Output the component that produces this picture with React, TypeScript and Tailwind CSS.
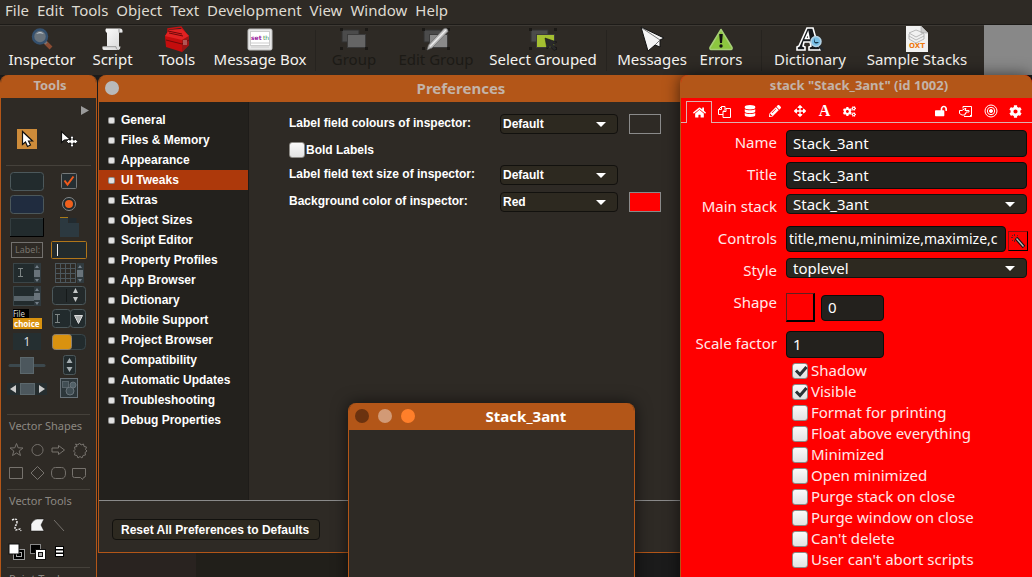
import React, { useState } from "react";
import type { ReactNode } from "react";
import { FaArrowsAlt, FaCog, FaCogs, FaDatabase, FaFont, FaHome, FaLockOpen, FaPencilAlt } from "react-icons/fa";

const menus = ["File", "Edit", "Tools", "Object", "Text", "Development", "View", "Window", "Help"];

const InspectorIcon = () => (
    <svg width="24" height="24" viewBox="0 0 24 24">
        <path d="M15 15l6 6" stroke="#8a4b32" strokeWidth="4" />
        <path d="M14 14l2.5 2.5" stroke="#777" strokeWidth="3" />
        <circle cx="10" cy="9.500" r="7" fill="#68727b" stroke="#34506e" strokeWidth="2.500" />
        <path d="M6 7q4-4 8 0q-4-1.500-8 0" fill="#c3ccd4" />
    </svg>
);

const ScriptIcon = () => (
    <svg width="24" height="24" viewBox="0 0 24 24">
        <defs>
            <linearGradient id="paper" x1="0" y1="0" x2="1" y2="1">
                <stop offset="0" stopColor="#fff" />
                <stop offset="1" stopColor="#d5d5d5" />
            </linearGradient>
        </defs>
        <path d="M5 1.500h14q3 0 2.500 4H18v14h1.500q0 3-2 3.500H3q-2 0-1.500-3.500h4.500V6Q3.500 4 5 1.500z" fill="url(#paper)" />
        <path d="M18 2v3.500h3M2.500 19.700h12.500q0 2 1.500 3" stroke="#999" fill="none" />
    </svg>
);

const ToolboxIcon = () => (
    <svg width="26" height="26" viewBox="0 0 26 26">
        <path d="M4 8V3l13-2 5 7" stroke="#c41212" strokeWidth="1.500" fill="none" />
        <path d="M1 10L5 4l13-1 7 7v9l-7 7L2 21z" fill="#c40d0d" />
        <path d="M1 10l17 4 7-4-7-7-13 1z" fill="#e02222" />
        <path d="M18 14l7-4v9l-7 7z" fill="#9a1515" />
        <path d="M2 14l16 4 7-4M5 7l14 3M4 5l14 3" stroke="#6e0808" fill="none" />
        <rect x="19" y="14" width="4" height="5" fill="#b05555" />
    </svg>
);

const MessageBoxIcon = () => (
    <svg width="26" height="24" viewBox="0 0 26 24">
        <rect x="1" y="2" width="24" height="21" rx="1.500" fill="#e9e9e9" stroke="#bbb" />
        <rect x="3.500" y="4.500" width="19" height="14" fill="#fff" stroke="#ccc" />
        <path d="M4 16h18M4 20h18" stroke="#ccc" />
        <text x="4" y="13" fontSize="6" fontWeight="bold" fontFamily="DejaVu Sans" fill="#9a1ba0">set</text>
        <text x="16" y="13" fontSize="6" fontFamily="DejaVu Sans" fill="#3f8f55">th</text>
    </svg>
);

const GroupIcon = ({ front, edit, select }: { front: string; edit?: boolean; select?: boolean }) => (
    <svg width="30" height="24" viewBox="0 0 30 24">
        <rect x="3" y="3" width="17" height="12" fill="#4b4b4b" stroke="#303030" />
        <rect x="8.500" y="7.500" width="18" height="13" fill={front} stroke="#3b3b3b" />
        <path d="M1 1h3v3H1zM26 1h3v3h-3zM1 20h3v3H1zM26 20h3v3h-3z" fill="#1b1916" />
        {edit && (
            <>
                <path d="M6 23l1.500-5L23 1.500q4-1 4 3L11 21z" fill="#bbb" stroke="#666" strokeWidth=".7" />
                <path d="M9 19.500L25 3" stroke="#eee" strokeWidth="1.300" />
            </>
        )}
        {select && <path d="M17 11l12 4-4 2.500 4 4.500-3 1.500-4-4.500-3 3z" fill="#292929" stroke="#111" strokeWidth=".5" />}
    </svg>
);

const PlaneIcon = () => (
    <svg width="26" height="26" viewBox="0 0 26 26">
        <path d="M2 1l23 11-4 2v7l-5-2-7 6z" fill="#f4f4f4" stroke="#111" />
        <path d="M3 2l18 12M16 19l5-5" stroke="#666" strokeWidth=".9" />
    </svg>
);

const WarningIcon = () => (
    <svg width="26" height="24" viewBox="0 0 26 24">
        <path d="M13 2.500L24 20.500q.5 2-1 2H3q-1.500 0-1-2z" fill="#8cc63f" stroke="#a6cf76" strokeWidth="1.500" strokeLinejoin="round" />
        <path d="M11.200 7h3.600l-.8 9h-2z" fill="#111" />
        <circle cx="13" cy="19" r="1.700" fill="#111" />
    </svg>
);

const DictionaryIcon = () => (
    <svg width="30" height="26" viewBox="0 0 30 26">
        <path d="M2 21l2-1L12 2h6l5 18 2 1v3H14v-3l2-1-1-4H9l-1 4 2 1v3H2zM10.500 12.500H14L13 7z" fill="#15181c" stroke="#fff" strokeWidth="1.600" />
        <path d="M24 20l4 4" stroke="#25292d" strokeWidth="3" />
        <circle cx="21" cy="15.500" r="5" fill="#78bfe6" stroke="#b5d3e6" strokeWidth="1.500" />
        <path d="M20 12v4h4q-3 3-5 0z" fill="#14364c" />
    </svg>
);

const OxtIcon = () => (
    <svg width="24" height="26" viewBox="0 0 24 26">
        <path d="M1 0h15l7 7v19H1z" fill="#f1f1f1" />
        <path d="M16 0v7h7" fill="#ccc" stroke="#aaa" strokeWidth=".6" />
        <path d="M4 7l7-3 8 3-8 4zM4 10l7 4 8-4M4 13l7 4 8-4M4 8v5M19 8v5" stroke="#aaa" fill="none" strokeWidth=".8" />
        <text x="12" y="22" textAnchor="middle" fontSize="7" fontWeight="bold" fontFamily="DejaVu Sans" fill="#ee7a10">OXT</text>
    </svg>
);

type Tool = { label: string; width: string; icon: ReactNode; disabled?: boolean; divider?: boolean };

const toolbar: Tool[] = [
    { label: "Inspector", width: "w-[84px]", icon: <InspectorIcon /> },
    { label: "Script", width: "w-[57px]", icon: <ScriptIcon /> },
    { label: "Tools", width: "w-[72px]", icon: <ToolboxIcon /> },
    { label: "Message Box", width: "w-[94px]", icon: <MessageBoxIcon />, divider: true },
    { label: "Group", width: "w-[60px]", icon: <GroupIcon front="#656565" />, disabled: true },
    { label: "Edit Group", width: "w-[104px]", icon: <GroupIcon front="#8a8a8a" edit />, disabled: true },
    { label: "Select Grouped", width: "w-[110px]", icon: <GroupIcon front="#a4bf31" select />, divider: true },
    { label: "Messages", width: "w-[74px]", icon: <PlaneIcon /> },
    { label: "Errors", width: "w-[64px]", icon: <WarningIcon />, divider: true },
    { label: "Dictionary", width: "w-[80px]", icon: <DictionaryIcon /> },
    { label: "Sample Stacks", width: "w-[134px]", icon: <OxtIcon /> },
];

const Toolbar = () => (
    <div className="flex bg-[#888888]">
        <div className="flex h-[50px] bg-[#2e2a25] border-t border-[#3d3934]">
            {toolbar.map((tool) => (
                <React.Fragment key={tool.label}>
                    <button
                        disabled={tool.disabled}
                        className={`${tool.width} shrink-0 flex flex-col items-center pt-px whitespace-nowrap ${tool.disabled ? "text-[#1c1a16]" : "text-[#f5f3ef]"}`}
                    >
                        <span className="h-6 flex items-center">{tool.icon}</span>
                        <span className="relative leading-4">{tool.label}</span>
                    </button>
                    {tool.divider && <div className="w-px mx-2 my-1 bg-[#26231f]" />}
                </React.Fragment>
            ))}
        </div>
    </div>
);

/* ---------- tools palette ---------- */

const edge = "#4c585b";
const fill = "#222b2d";

const Cell = ({ label, children }: { label: string; children: ReactNode }) => (
    <button aria-label={label} className="block">
        <svg width="42" height="23" viewBox="0 0 42 23">{children}</svg>
    </button>
);

const ibeam = (x: number, y: number) => <path d={`M${x} ${y}h5M${x + 2.5} ${y}v8M${x} ${y + 8}h5`} stroke="#7d8585" fill="none" />;
const scroller = (x: number) => (
    <>
        <rect x={x} y="1" width="7" height="20" fill="#303a3e" />
        <rect x={x} y="8" width="6" height="7" fill="#69737a" />
        <path d={`M${x + 1} 6l2-3 2 3zM${x + 1} 17l2 3 2-3z`} fill="#75808a" />
    </>
);

const widgets: [string, ReactNode][] = [
    ["Button", <rect x="4.500" y="2.500" width="33" height="18" rx="3" fill={fill} stroke={edge} />],
    ["Check box", <>
        <rect x="13.500" y="3.500" width="15" height="15" rx="1" fill="#252e32" stroke="#75797a" />
        <path d="M16.500 10.500l3 4 6-8" stroke="#f05a1c" strokeWidth="2" fill="none" />
    </>],
    ["Default button", <rect x="4.500" y="2.500" width="33" height="18" rx="3" fill="#202c3f" stroke={edge} />],
    ["Radio button", <>
        <circle cx="21" cy="11" r="6.500" fill="#222b2d" stroke="#85888a" />
        <circle cx="21" cy="11" r="4" fill="#f0601c" />
    </>],
    ["Rectangle button", <>
        <rect x="4" y="2" width="34" height="19" fill={fill} />
        <path d="M4.500 20V2.500H37" stroke="#343e40" fill="none" />
        <path d="M4 20.500h33.500V2" stroke="#000" fill="none" />
    </>],
    ["Tab panel", <>
        <path d="M12 2h8v6h-8zM12 7h19v14H12z" fill="#2c3940" />
        <path d="M20.500 2h8v5h-8z" fill="#222b30" />
        <path d="M12 1.500h8" stroke="#a97a17" />
    </>],
    ["Label field", <>
        <rect x="5.500" y="3.500" width="31" height="15" fill="none" stroke="#b8b8b8" strokeDasharray="1 1" />
        <text x="9" y="14" fontSize="9" fontFamily="Noto Sans" fill="#77736c">Label:</text>
    </>],
    ["Text entry field", <>
        <rect x="3.500" y="2.500" width="35" height="17" rx="1" fill={fill} stroke="#b0761a" />
        <path d="M9.500 5v12" stroke="#eee" />
    </>],
    ["Scrolling field", <>
        <rect x="7.500" y="1.500" width="27" height="19" fill={fill} stroke="#3a4548" />
        {ibeam(12, 6.5)}
        {scroller(28)}
    </>],
    ["Table field", <>
        <path d="M7.500 1v20M12.500 1v20M17.500 1v20M22.500 1v20M27.500 1v20M7 1.500h21M7 6.500h21M7 11.500h21M7 16.500h21M7 20.500h21" stroke="#4c575d" fill="none" />
        {scroller(29)}
    </>],
    ["List field", <>
        <rect x="7.500" y="1.500" width="27" height="19" fill={fill} stroke="#3a4548" />
        <rect x="8" y="11" width="20" height="5" fill="#59646a" />
        {scroller(28)}
    </>],
    ["Spinner", <>
        <rect x="4.500" y="1.500" width="33" height="18" rx="3" fill="#23292a" stroke={edge} />
        <path d="M18.500 4v13" stroke="#151919" />
        <path d="M25 8l2.500-5 2.500 5zM25 12l2.500 5 2.500-5z" fill="#c5c8c8" />
    </>],
    ["Option menu", <>
        <rect x="7" y="1" width="16" height="9" fill="#000" />
        <text x="7" y="9" fontSize="8" fontFamily="DejaVu Sans Condensed" fill="#ddd">File</text>
        <rect x="7" y="10" width="29" height="11" fill="#d9920f" />
        <text x="8" y="18.500" fontSize="8" fontWeight="bold" fontFamily="Noto Sans" fill="#fff">choice</text>
    </>],
    ["Combo box", <>
        <rect x="4.500" y="1.500" width="18" height="18" rx="3" fill={fill} stroke={edge} />
        <rect x="22.500" y="1.500" width="15" height="18" rx="3" fill={fill} stroke={edge} />
        {ibeam(7, 6.5)}
        <path d="M26.500 7.500h8l-4 8z" fill="#aeb2b2" stroke="#ddd" />
    </>],
    ["Popup menu", <>
        <rect x="7" y="2" width="28" height="17" fill="#252f31" />
        <text x="21" y="15" textAnchor="middle" fontSize="12" fontFamily="Noto Sans" fill="#ddd">1</text>
    </>],
    ["Switch", <>
        <rect x="4.500" y="3.500" width="33" height="15" rx="4" fill={fill} stroke="#39464a" />
        <rect x="4.500" y="3.500" width="19" height="15" rx="3" fill="#d9920f" stroke="#8f826d" />
    </>],
    ["Slider", <>
        <path d="M4 11.500h34" stroke="#3c484d" strokeWidth="3" strokeLinecap="round" />
        <rect x="14.500" y="3.500" width="13" height="16" fill="#4c575d" stroke="#5c686d" />
    </>],
    ["Little arrows", <>
        <rect x="15.500" y="1.500" width="12" height="19" rx="2" fill={fill} stroke={edge} />
        <path d="M18.500 9l3-5 3 5zM18.500 13l3 5 3-5z" fill="#a5adb0" />
    </>],
    ["Scrollbar", <>
        <rect x="1" y="6" width="40" height="12" fill="#252d2f" />
        <rect x="14.500" y="6.500" width="14" height="11" fill="#4c575d" stroke="#5c686d" />
        <path d="M10 8v8l-6-4zM33 8v8l6-4z" fill="#ccc" />
    </>],
    ["Image area", <>
        <rect x="12.500" y="1.500" width="17" height="19" fill="#2d373b" stroke="#69737a" />
        <rect x="14.500" y="4.500" width="6" height="6" fill="#414e54" stroke="#59646a" />
        <circle cx="25" cy="8" r="3" fill="#516067" stroke="#69737a" />
        <circle cx="22" cy="14" r="4" fill="#414e54" stroke="#69737a" />
    </>],
];

const shapes: [string, string][] = [
    ["Star", "M10.500 4.500l1.700 4.300 4.800.2-3.800 3 1.300 4.500-4-2.500-4 2.500 1.300-4.500L4 9l4.800-.2z"],
    ["Oval", "M10.500 5.500a5.500 5.500 0 1 0 .01 0z"],
    ["Arrow", "M4 9h6.500V6.500l6 4.500-6 4.500V13H4z"],
    ["Polygon", "M10.500 4l1.500 2 2.500-1 .5 2.500 2.500.5-1 2.500 1.500 1.500-2 1.500.5 2.500-2.500.5-1 2.500-2-1.500-2 1.500-1-2.500-2.500-.5.500-2.500-1.500-1.500 1.500-1.500-.5-2.500 2.500-.5L6.500 5 9 6z"],
    ["Rectangle", "M3.500 5.500h13v11h-13z"],
    ["Diamond", "M10.500 4.500l6.500 6.500-6.500 6.500L4 11z"],
    ["Rounded rectangle", "M7.500 5.500h6q4 0 4 5.500t-4 5.500h-6q-4 0-4-5.500t4-5.500z"],
    ["Callout", "M3.500 6.500h13v7q0 2-2 2l-1 2-2-2h-6q-2 0-2-2z"],
];

const paints: [string, ReactNode][] = [
    ["Curve", <path d="M6 6q5-2 5 1t-1 4q-2 3 0 5l4-1 1 2" stroke="#eee" strokeWidth="1.500" fill="none" strokeDasharray="2 1" />],
    ["Polygon", <path d="M4 16V10q3-5 6-5h7l-3 6 3 6H4z" fill="#f4f4f4" stroke="#111" strokeWidth=".5" />],
    ["Line", <path d="M6 6l10 11" stroke="#76726d" />],
    ["", null],
    ["Fill colour", <>
        <rect x="7.500" y="9.500" width="11" height="10" fill="#000" stroke="#999" />
        <rect x="10.500" y="12.500" width="5" height="4" fill="none" stroke="#aaa" />
        <rect x="3" y="4" width="10" height="10" fill="#fff" stroke="#111" />
    </>],
    ["Line colour", <>
        <rect x="3.500" y="4.500" width="10" height="9" fill="#000" stroke="#888" />
        <rect x="8.500" y="9.500" width="10" height="10" fill="#fff" stroke="#111" />
        <rect x="11.500" y="12.500" width="4" height="4" fill="#aaa" stroke="#111" />
    </>],
    ["Line width", <>
        <rect x="7" y="6" width="9" height="11" fill="#000" />
        <path d="M8 8h7M8 11.500h7M8 15h7" stroke="#fff" strokeWidth="2" />
    </>],
];

const Heading = ({ children }: { children: string }) => (
    <h2 className="border-t border-[#45413b] mx-px pl-[2px] pt-[2px] text-[11px] leading-[18px] text-[#8c8882] whitespace-nowrap">{children}</h2>
);

const ToolsPalette = () => (
    <section className="absolute left-0 top-[75px] w-[97px] h-[560px] border-x border-[#b35618] rounded-t-lg bg-[#2e2a25] overflow-hidden">
        <h1 className="h-[23px] pl-[3px] bg-[#b35618] text-center text-[13px] leading-[21px] font-bold text-[#c3b3a8]">Tools</h1>
        <div className="px-[5px]">
            <div className="flex justify-end pt-[7px] pr-px">
                <button aria-label="Browse">
                    <svg width="10" height="12" viewBox="0 0 10 12"><path d="M1 1v9l8-4.500z" fill="#9b9b9b" /></svg>
                </button>
            </div>
            <div className="grid grid-cols-[42px_42px] place-items-center mt-3 pb-4 border-b border-[#45413b]">
                <button aria-label="Edit" className="size-5 bg-[#cd8b3a]">
                    <svg width="20" height="20" viewBox="0 0 20 20"><path d="M5.500 2.500v13l3-2.500 2 4.500 3-1.500-2-4h4z" fill="#fff" stroke="#111" strokeWidth="1.200" /></svg>
                </button>
                <button aria-label="Move">
                    <svg width="20" height="20" viewBox="0 0 20 20">
                        <path d="M2.500 2.500v11l3-2.500 6-.5z" fill="#fff" stroke="#111" strokeWidth="1.200" />
                        <path d="M13 6.500l2 2.500h-1v2h2v-1l3 2.500-3 2.500v-1h-2v2h1l-2 2.500-2-2.500h1v-2h-2v1L7.500 12.500l2.500-2.500v1h2V9h-1z" fill="#fff" stroke="#111" strokeWidth=".8" />
                    </svg>
                </button>
            </div>
            <div className="grid grid-cols-[42px_42px] pt-1 pb-[14px]">
                {widgets.map(([label, art]) => <Cell key={label} label={label}>{art}</Cell>)}
            </div>
            <Heading>Vector Shapes</Heading>
            <div className="grid grid-cols-[21px_21px_21px_21px] pt-1 pb-1">
                {shapes.map(([label, d]) => (
                    <button key={label} aria-label={label}>
                        <svg width="21" height="23" viewBox="0 0 21 23"><path d={d} fill="none" stroke="#76726d" /></svg>
                    </button>
                ))}
            </div>
            <Heading>Vector Tools</Heading>
            <div className="grid grid-cols-[21px_21px_21px_21px] gap-y-[3px] pt-1 pb-1">
                {paints.map(([label, art]) => label ? (
                    <button key={label} aria-label={label}>
                        <svg width="21" height="23" viewBox="0 0 21 23">{art}</svg>
                    </button>
                ) : <span key="gap" />)}
            </div>
            <Heading>Paint Tools</Heading>
        </div>
    </section>
);

/* ---------- preferences ---------- */

const categories = [
    "General", "Files & Memory", "Appearance", "UI Tweaks", "Extras", "Object Sizes", "Script Editor", "Property Profiles",
    "App Browser", "Dictionary", "Mobile Support", "Project Browser", "Compatibility", "Automatic Updates", "Troubleshooting",
    "Debug Properties",
];

const Dropdown = ({ id, options, className }: { id: string; options: string[]; className: string }) => (
    <span className="relative block">
        <select id={id} className={`block w-full h-5 appearance-none rounded border border-[#12110e] bg-[#2d2920] text-white leading-[18px] ${className}`}>
            {options.map((option) => <option key={option}>{option}</option>)}
        </select>
        <svg className="absolute right-3 top-2 pointer-events-none" width="10" height="5" viewBox="0 0 10 5"><path d="M0 0h10L5 5z" fill="#fff" /></svg>
    </span>
);

const CheckBox = ({ label, defaultChecked, className }: { label: string; defaultChecked?: boolean; className: string }) => (
    <label className={`flex items-center ${className}`}>
        <span className="relative block size-4">
            <input
                type="checkbox"
                defaultChecked={defaultChecked}
                className="peer block size-4 appearance-none rounded-[3px] border border-[#8d8b87] bg-linear-to-b from-[#fafafa] to-[#e2e2e2]"
            />
            <svg className="absolute inset-0 hidden peer-checked:block pointer-events-none" width="16" height="16" viewBox="0 0 16 16">
                <path d="M4 7.500l4 4L14.500 4" stroke="#2b3336" strokeWidth="3" fill="none" />
            </svg>
        </span>
        {label}
    </label>
);

const Preferences = () => {
    const [active, setActive] = useState("UI Tweaks");

    return (
        <section className="absolute left-[98px] right-[208px] top-[75px] border-x border-b border-[#b35618] rounded-t-lg bg-[#2e2a25] overflow-hidden font-['Liberation_Sans',Arial,sans-serif] text-[12px] font-bold text-white">
            <header className="h-[27px] flex items-center px-[6px] pb-[2px] bg-[#b35618] font-['Noto_Sans',sans-serif] text-[15px] text-[#c3b3a8]">
                <button aria-label="Close" className="size-[14px] rounded-full bg-[#b9b9b9]" />
                <h1 className="flex-1 text-center pr-[14px] leading-6">Preferences</h1>
            </header>
            <div className="flex h-[399px] border-b border-[#8a8a8a]">
                <nav className="w-[150px] shrink-0 pt-2 bg-[#23211d] border-r border-[#1e1c19]">
                    {categories.map((category) => (
                        <button
                            key={category}
                            onClick={() => setActive(category)}
                            className={`flex items-center gap-[6px] w-full h-5 pl-[9px] text-left whitespace-nowrap ${active === category ? "bg-[#ad390b]" : ""}`}
                        >
                            <svg width="7" height="7" viewBox="0 0 7 7">
                                <rect width="7" height="7" rx="2" fill="#8f8f8f" />
                                <rect x="1" y="1" width="5" height="5" rx="1" fill="#e2e2e2" />
                            </svg>
                            {category}
                        </button>
                    ))}
                </nav>
                <div className="flex flex-col gap-[7px] pl-10 pt-3">
                    <div className="grid grid-cols-[211px_118px_32px] leading-[18px]">
                        <label htmlFor="label-colour">Label field colours of inspector:</label>
                        <Dropdown id="label-colour" options={["Default"]} className="pl-[2px]" />
                        <button aria-label="Label colour" className="ml-[11px] w-8 h-5 border border-[#8a8a8a]" />
                    </div>
                    <CheckBox label="Bold Labels" className="h-[17px] gap-px" />
                    <div className="grid grid-cols-[211px_118px_32px] leading-[18px]">
                        <label htmlFor="label-size">Label field text size of inspector:</label>
                        <Dropdown id="label-size" options={["Default"]} className="pl-[2px]" />
                    </div>
                    <div className="grid grid-cols-[211px_118px_32px] leading-[18px]">
                        <label htmlFor="background">Background color of inspector:</label>
                        <Dropdown id="background" options={["Red"]} className="pl-[2px]" />
                        <button aria-label="Background colour" className="ml-[11px] w-8 h-5 border border-[#8a8a8a] bg-[#ff0000]" />
                    </div>
                </div>
            </div>
            <footer className="px-[13px] pt-[18px] pb-3">
                <button className="block h-[21px] px-[10px] pl-2 rounded border border-[#12110e] bg-[#2d2920] leading-[18px] whitespace-nowrap">Reset All Preferences to Defaults</button>
            </footer>
        </section>
    );
};

/* ---------- property inspector ---------- */

const CopyIcon = () => (
    <svg width="13" height="13" viewBox="0 0 13 13" fill="none" stroke="#fff">
        <path d="M5 9.500H.5V4.500l3-3H7V4M.5 4.500h3v-3M5 6.500l3-3h4.500v9H5zM5 6.500h3v-3" />
    </svg>
);

const HandoffIcon = () => (
    <svg width="14" height="13" viewBox="0 0 14 13" fill="none" stroke="#fff">
        <path d="M4 3.500v-2h8.500v10H5M12.500 9.500l-2 2M.5 5.500h2.500L6 3.500h1l-1 2h4v1.500H7v1.500H6V10H3L.5 8.500z" />
    </svg>
);

const TargetIcon = () => (
    <svg width="14" height="14" viewBox="0 0 14 14" fill="none" stroke="#fff">
        <circle cx="7" cy="7" r="6" />
        <circle cx="7" cy="7" r="3.700" />
        <circle cx="7" cy="7" r="1.500" fill="#fff" />
    </svg>
);

const tabs: [string, ReactNode][] = [
    ["Copy", <CopyIcon />],
    ["Custom", <FaDatabase size={12} />],
    ["Colours", <FaPencilAlt size={12} />],
    ["Position", <FaArrowsAlt size={12} />],
    ["Font", <span className="font-['Liberation_Serif',serif] text-[16px] leading-4 font-bold">A</span>],
    ["Advanced", <FaCogs size={13} />],
];

const actions: [string, ReactNode][] = [
    ["Lock", <FaLockOpen size={12} />],
    ["Send", <HandoffIcon />],
    ["Target", <TargetIcon />],
    ["Settings", <FaCog size={13} />],
];

const flags = [
    "Shadow", "Visible", "Format for printing", "Float above everything", "Minimized", "Open minimized", "Purge stack on close",
    "Purge window on close", "Can't delete", "User can't abort scripts",
];

const field = "min-w-0 rounded border border-[#0d0c0a] bg-[#23211d] text-white";

const Row = ({ label, id, tall, children }: { label: string; id: string; tall?: boolean; children: ReactNode }) => (
    <div className={`grid grid-cols-[96px_1fr] gap-x-[9px] ${tall ? "h-[41px]" : "h-8"}`}>
        <label htmlFor={id} className="text-right leading-[30px] whitespace-nowrap">{label}</label>
        <div className="min-w-0 pt-[3px]">{children}</div>
    </div>
);

const Inspector = () => (
    <section className="absolute left-[680px] right-0 top-[75px] h-[560px] border-l border-[#b35618] rounded-t-lg bg-[#ff0000] overflow-hidden text-[#ffe9e9] shadow-[0_0_16px_rgba(0,0,0,0.6)]">
        <h1 className="h-[23px] pl-[5px] bg-[#b35618] text-center text-[13px] leading-[21px] font-bold text-[#c3b3a8]">stack "Stack_3ant" (id 1002)</h1>
        <div className="flex h-[25px] text-white">
            <div className="w-[5px] border-b border-[#ddb0b0]" />
            <button aria-label="Basic" className="flex items-center justify-center w-[26px] mt-[3px] border-x border-t border-[#ddb0b0]"><FaHome size={13} /></button>
            <div className="flex flex-1 pt-[2px] pr-1 border-b border-[#ddb0b0]">
                {tabs.map(([label, icon]) => <button key={label} aria-label={label} className="flex items-center justify-center w-[25px]">{icon}</button>)}
                <div className="flex-1" />
                {actions.map(([label, icon]) => <button key={label} aria-label={label} className="flex items-center justify-center w-[25px]">{icon}</button>)}
            </div>
        </div>
        <form className="pt-1 pr-[5px]">
            <Row label="Name" id="name"><input id="name" defaultValue="Stack_3ant" className={`${field} block w-full h-[27px] px-[6px] pb-[2px]`} /></Row>
            <Row label="Title" id="title"><input id="title" defaultValue="Stack_3ant" className={`${field} block w-full h-[27px] px-[6px] pb-[2px]`} /></Row>
            <Row label="Main stack" id="main"><Dropdown id="main" options={["Stack_3ant"]} className="pl-[6px]" /></Row>
            <Row label="Controls" id="controls">
                <div className="flex items-center gap-[2px] -mr-px">
                    <input id="controls" defaultValue="title,menu,minimize,maximize,c" className={`${field} flex-1 h-[26px] pl-[2px] pb-[2px] text-[14px]`} />
                    <button type="button" aria-label="Edit controls" className="size-5 mt-1 border border-t-[#8a1010] border-l-[#8a1010] border-b-black border-r-black">
                        <svg width="18" height="18" viewBox="0 0 18 18">
                            <path d="M7 6l8 9" stroke="#111" strokeWidth="3.500" />
                            <path d="M7.500 6.500l7 8" stroke="#bbb" strokeWidth="1.300" />
                            <path d="M5.500 2v2M2 5.500h2M3 3l1 1M9 3L8 4M3 9l1-1M5.500 8v2" stroke="#5a2020" />
                        </svg>
                    </button>
                </div>
            </Row>
            <Row label="Style" id="style"><Dropdown id="style" options={["toplevel"]} className="pl-[6px]" /></Row>
            <Row label="Shape" id="shape" tall>
                <div className="flex items-center gap-[6px] pt-[3px]">
                    <button type="button" aria-label="Shape image" className="w-[29px] h-[29px] border-t border-l border-b-2 border-r-2 border-t-[#602020] border-l-[#602020] border-b-black border-r-black" />
                    <input id="shape" defaultValue="0" className={`${field} w-[63px] h-[26px] px-[6px] pb-[2px]`} />
                </div>
            </Row>
            <Row label="Scale factor" id="scale"><input id="scale" defaultValue="1" className={`${field} block w-[98px] h-[27px] px-[6px] pb-[2px]`} /></Row>
            <div className="pl-[111px]">
                {flags.map((flag, index) => <CheckBox key={flag} label={flag} defaultChecked={index < 2} className="h-[21px] gap-[3px] whitespace-nowrap" />)}
            </div>
        </form>
    </section>
);

const StackWindow = () => (
    <section className="absolute left-[348px] top-[403px] w-[287px] h-[240px] border-x border-[#b35618] rounded-t-lg bg-[#2e2a25] overflow-hidden shadow-[0_0_16px_rgba(0,0,0,0.6)]">
        <header className="h-[27px] flex items-center gap-[9px] px-[6px] pb-[2px] bg-[#b35618] text-white">
            <button aria-label="Close" className="size-[14px] rounded-full bg-[#6b320f]" />
            <button aria-label="Minimize" className="size-[14px] rounded-full bg-[#d29a76]" />
            <button aria-label="Maximize" className="size-[14px] rounded-full bg-[#ff7f2a]" />
            <h1 className="flex-1 text-center font-bold leading-6">Stack_3ant</h1>
        </header>
    </section>
);

export default function App() {
    return (
        <main className="relative min-h-screen h-screen overflow-hidden bg-[#1b1b1b] font-['Noto_Sans',sans-serif] text-[15px]">
            <nav className="flex gap-2 h-[25px] pl-[5px] bg-[#2e2a25] border-b border-[#1d1b18] text-[#dfdbd2] leading-5">
                {menus.map((menu) => <button key={menu} className="self-start">{menu}</button>)}
            </nav>
            <Toolbar />
            <div className="absolute left-[97px] right-[397px] top-[520px] h-[80px] flex">
                <div className="w-[99px] bg-[#292320]" />
                <div className="flex-1 bg-[#211f1a]" />
            </div>
            <Preferences />
            <ToolsPalette />
            <Inspector />
            <StackWindow />
        </main>
    );
}
